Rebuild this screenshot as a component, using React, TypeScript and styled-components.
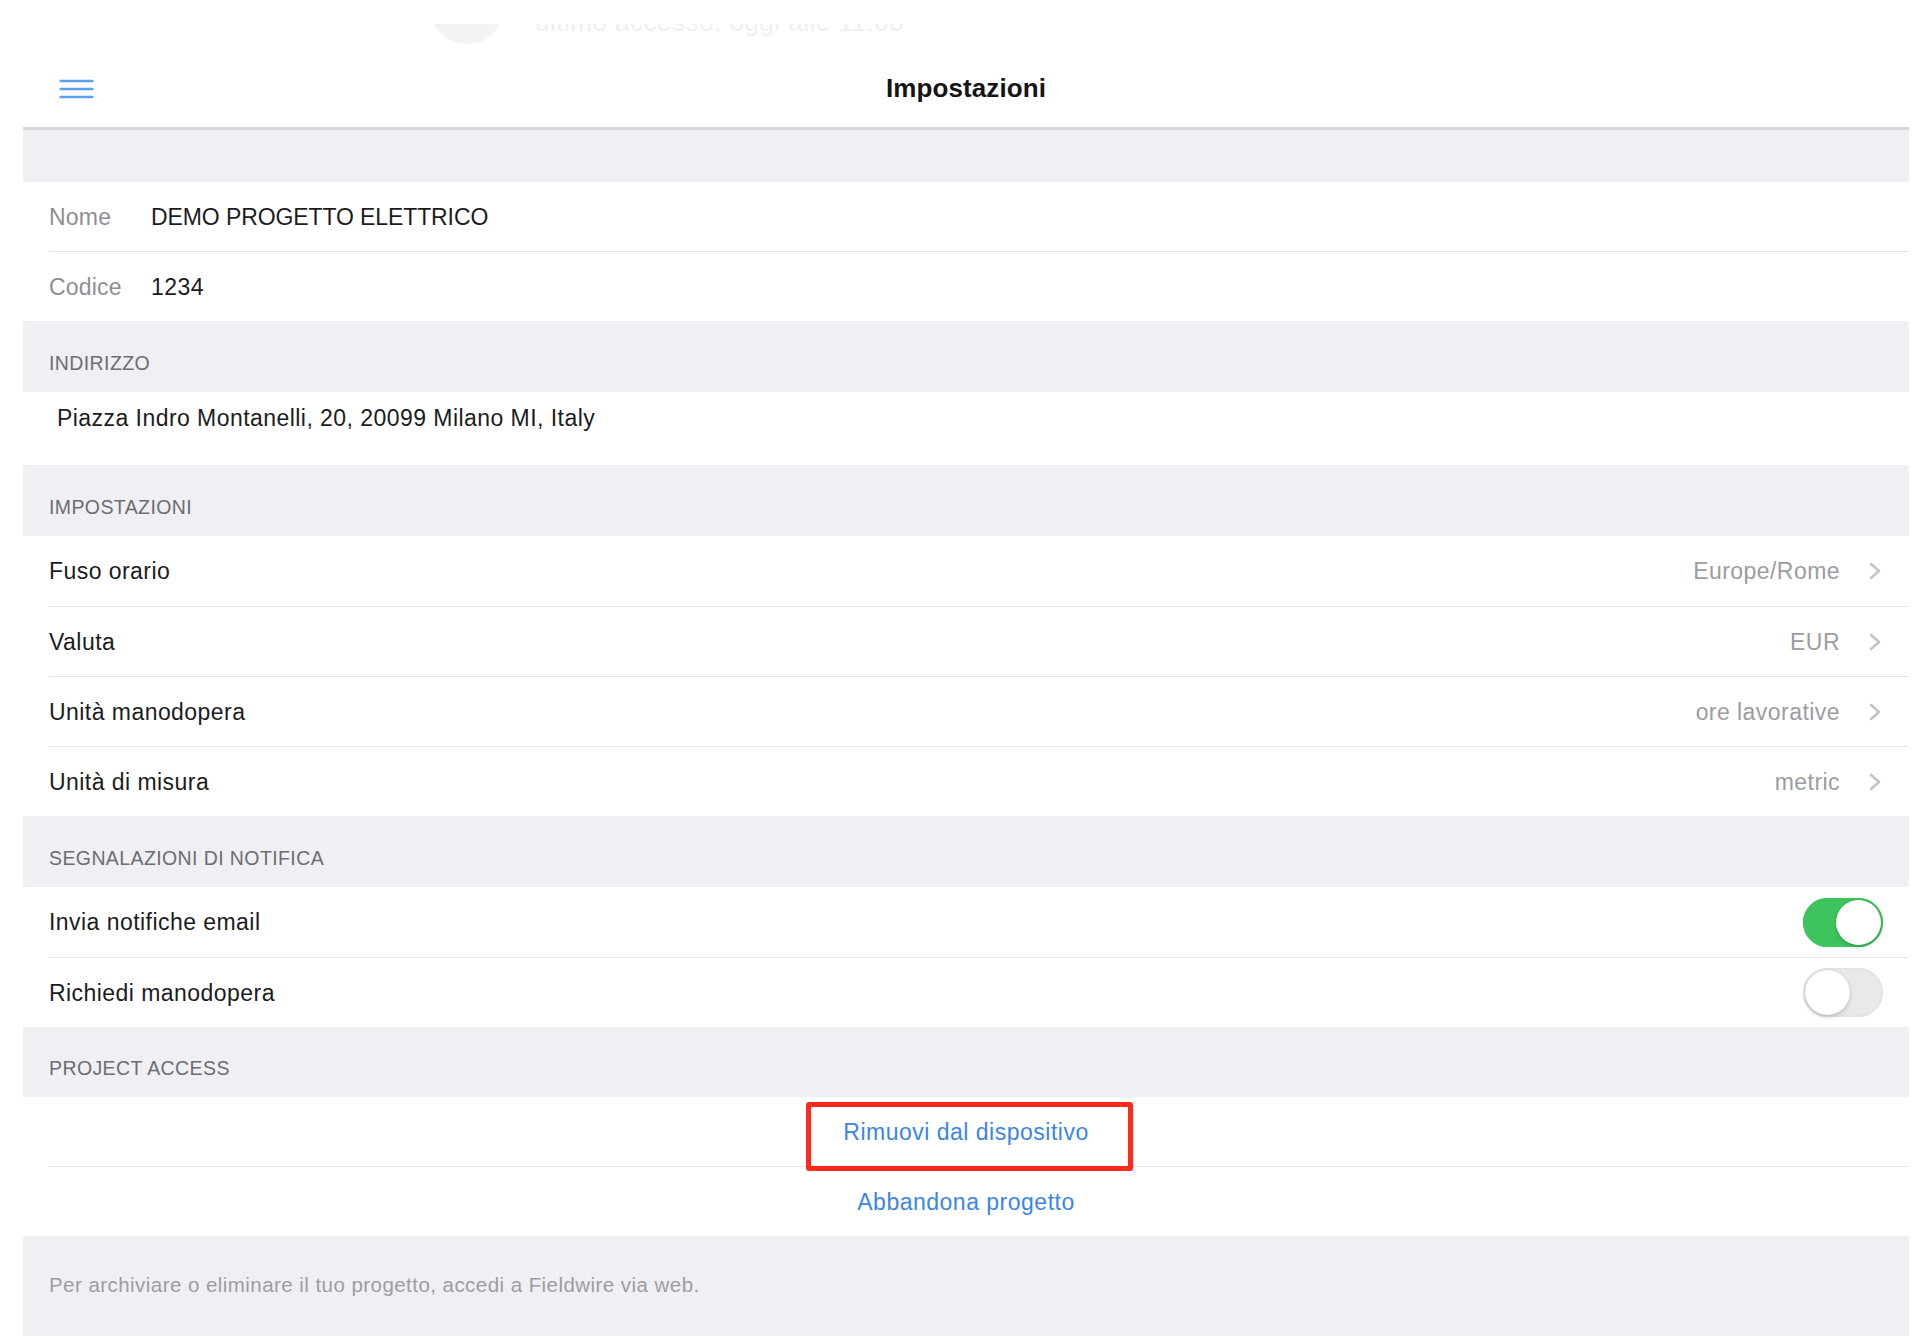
import React from "react";
import styled, { createGlobalStyle } from "styled-components";

const GlobalStyle = createGlobalStyle`
  html, body {
    margin: 0;
    padding: 0;
    background: #ffffff;
  }
  body {
    font-family: "Liberation Sans", Arial, sans-serif;
    color: #1c1c1e;
    -webkit-font-smoothing: antialiased;
  }
`;

const Page = styled.div`
  width: 1928px;
  height: 1336px;
  overflow: hidden;
  background: #ffffff;
  display: flex;
  flex-direction: column;
`;

// faint content of the screen behind the modal, cut at the top
const GhostStrip = styled.div`
  height: 50px;
  box-sizing: border-box;
  padding: 24px 0 0 430px;
`;

const GhostWindow = styled.div`
  height: 26px;
  overflow: hidden;
`;

const GhostRow = styled.div`
  margin-top: -24px;
  display: flex;
  align-items: flex-start;
  gap: 31px;
`;

const GhostAvatar = styled.div`
  width: 74px;
  height: 74px;
  margin-top: -30px;
  border-radius: 50%;
  background: #f5f3f1;
`;

const GhostText = styled.div`
  font-size: 26px;
  line-height: 44px;
  color: #efefef;
  letter-spacing: 0.5px;
`;

const Panel = styled.div`
  margin-left: 23px;
  width: 1886px;
  flex: 1;
  display: flex;
  flex-direction: column;
  background: #efeff4;
`;

const NavBar = styled.div`
  height: 77px;
  display: grid;
  grid-template-columns: 1fr auto 1fr;
  align-items: center;
  padding: 0 36px;
  background: #ffffff;
  border-bottom: 3px solid #d8d8dd;
`;

const MenuButton = styled.div`
  display: flex;
  align-items: center;
  height: 20px;
`;

const Title = styled.div`
  font-size: 26px;
  font-weight: 700;
  color: #151515;
  letter-spacing: 0.1px;
`;

const Gap = styled.div<{ $h: number }>`
  height: ${(p) => p.$h}px;
`;

const SectionHeader = styled.div<{ $h?: number }>`
  height: ${(p) => p.$h ?? 71}px;
  box-sizing: border-box;
  display: flex;
  align-items: flex-end;
  padding: 0 0 17px 26px;
  font-size: 19.5px;
  color: #6d6d72;
  text-transform: uppercase;
  letter-spacing: 0.4px;
`;

const Group = styled.div`
  background: #ffffff;
`;

const Row = styled.div<{ $indent?: number }>`
  padding-left: ${(p) => p.$indent ?? 26}px;
`;

const RowInner = styled.div<{ $sep?: boolean; $h?: number; $center?: boolean; $top?: boolean }>`
  height: ${(p) => p.$h ?? 70}px;
  box-sizing: border-box;
  display: flex;
  align-items: ${(p) => (p.$top ? "flex-start" : "center")};
  justify-content: ${(p) => (p.$center ? "center" : "flex-start")};
  padding-top: ${(p) => (p.$top ? 12 : 0)}px;
  padding-right: 26px;
  border-top: ${(p) => (p.$sep ? "1px solid #e6e6ea" : "none")};
  font-size: 23px;
  line-height: 28px;
  letter-spacing: 0.45px;
`;

const FieldLabel = styled.span`
  width: 102px;
  flex: none;
  color: #8e8e93;
  letter-spacing: 0.2px;
`;

const FieldValue = styled.span<{ $caps?: boolean }>`
  color: #1c1c1e;
  letter-spacing: ${(p) => (p.$caps ? "-0.1px" : "0.45px")};
`;

const RowTitle = styled.span`
  flex: 1;
  color: #1c1c1e;
`;

const DetailValue = styled.span`
  color: #9c9ca1;
  margin-right: 28px;
`;

const ChevronBox = styled.span`
  display: flex;
  align-items: center;
  margin-right: 1px;
`;

const Toggle = styled.div<{ $on: boolean }>`
  position: relative;
  width: 80px;
  height: 49px;
  border-radius: 25px;
  background: ${(p) => (p.$on ? "#3ec45c" : "#e9e9eb")};
  box-shadow: inset 0 0 0 2px ${(p) => (p.$on ? "#3ec45c" : "#e4e4e6")};

  &::after {
    content: "";
    position: absolute;
    top: 2px;
    left: ${(p) => (p.$on ? 33 : 2)}px;
    width: 45px;
    height: 45px;
    border-radius: 50%;
    background: #ffffff;
    box-shadow: 0 2px 4px rgba(0, 0, 0, 0.18), 0 0 0 0.5px rgba(0, 0, 0, 0.06);
  }
`;

const LinkText = styled.span<{ $highlight?: boolean }>`
  position: relative;
  color: #3a86e2;
  font-size: 23px;
  line-height: 30px;
  letter-spacing: 0.5px;

  &::after {
    content: "";
    display: ${(p) => (p.$highlight ? "block" : "none")};
    position: absolute;
    left: -37px;
    right: -44px;
    top: -15px;
    bottom: -24px;
    border: 5px solid #ff2a1c;
    border-radius: 3px;
  }
`;

const Footer = styled.div`
  flex: 1;
  padding: 37px 0 0 26px;
  font-size: 20.5px;
  color: #9d9da2;
  letter-spacing: 0.45px;
`;

function MenuIcon() {
  return (
    <svg width="35" height="20" viewBox="0 0 35 20">
      <g stroke="#5d9ff0" strokeWidth="2.4" strokeLinecap="round">
        <line x1="1.5" y1="2" x2="33.5" y2="2" />
        <line x1="1.5" y1="10" x2="33.5" y2="10" />
        <line x1="1.5" y1="18" x2="33.5" y2="18" />
      </g>
    </svg>
  );
}

function Chevron() {
  return (
    <svg width="14" height="18" viewBox="0 0 14 18">
      <polyline
        points="3,2 11,9 3,16"
        fill="none"
        stroke="#c4c4c9"
        strokeWidth="2.6"
        strokeLinecap="round"
        strokeLinejoin="round"
      />
    </svg>
  );
}

const settings = [
  { title: "Fuso orario", value: "Europe/Rome" },
  { title: "Valuta", value: "EUR" },
  { title: "Unità manodopera", value: "ore lavorative" },
  { title: "Unità di misura", value: "metric" },
];

const notifications = [
  { title: "Invia notifiche email", on: true },
  { title: "Richiedi manodopera", on: false },
];

export default function App() {
  return (
    <Page>
      <GlobalStyle />
      <GhostStrip>
        <GhostWindow>
          <GhostRow>
            <GhostAvatar />
            <GhostText>ultimo accesso: oggi alle 11:00</GhostText>
          </GhostRow>
        </GhostWindow>
      </GhostStrip>

      <Panel>
        <NavBar>
          <MenuButton>
            <MenuIcon />
          </MenuButton>
          <Title>Impostazioni</Title>
          <div />
        </NavBar>

        <Gap $h={52} />

        <Group>
          <Row>
            <RowInner $h={69}>
              <FieldLabel>Nome</FieldLabel>
              <FieldValue $caps>DEMO PROGETTO ELETTRICO</FieldValue>
            </RowInner>
          </Row>
          <Row>
            <RowInner $sep>
              <FieldLabel>Codice</FieldLabel>
              <FieldValue>1234</FieldValue>
            </RowInner>
          </Row>
        </Group>

        <SectionHeader>Indirizzo</SectionHeader>
        <Group>
          <Row $indent={34}>
            <RowInner $h={73} $top>
              <FieldValue>Piazza Indro Montanelli, 20, 20099 Milano MI, Italy</FieldValue>
            </RowInner>
          </Row>
        </Group>

        <SectionHeader $h={71}>Impostazioni</SectionHeader>
        <Group>
          {settings.map((s, i) => (
            <Row key={s.title}>
              <RowInner $sep={i > 0}>
                <RowTitle>{s.title}</RowTitle>
                <DetailValue>{s.value}</DetailValue>
                <ChevronBox>
                  <Chevron />
                </ChevronBox>
              </RowInner>
            </Row>
          ))}
        </Group>

        <SectionHeader $h={71}>Segnalazioni di notifica</SectionHeader>
        <Group>
          {notifications.map((n, i) => (
            <Row key={n.title}>
              <RowInner $sep={i > 0}>
                <RowTitle>{n.title}</RowTitle>
                <Toggle $on={n.on} />
              </RowInner>
            </Row>
          ))}
        </Group>

        <SectionHeader $h={70}>Project access</SectionHeader>
        <Group>
          <Row>
            <RowInner $center $h={69}>
              <LinkText $highlight>Rimuovi dal dispositivo</LinkText>
            </RowInner>
          </Row>
          <Row>
            <RowInner $center $sep>
              <LinkText>Abbandona progetto</LinkText>
            </RowInner>
          </Row>
        </Group>

        <Footer>Per archiviare o eliminare il tuo progetto, accedi a Fieldwire via web.</Footer>
      </Panel>
    </Page>
  );
}
